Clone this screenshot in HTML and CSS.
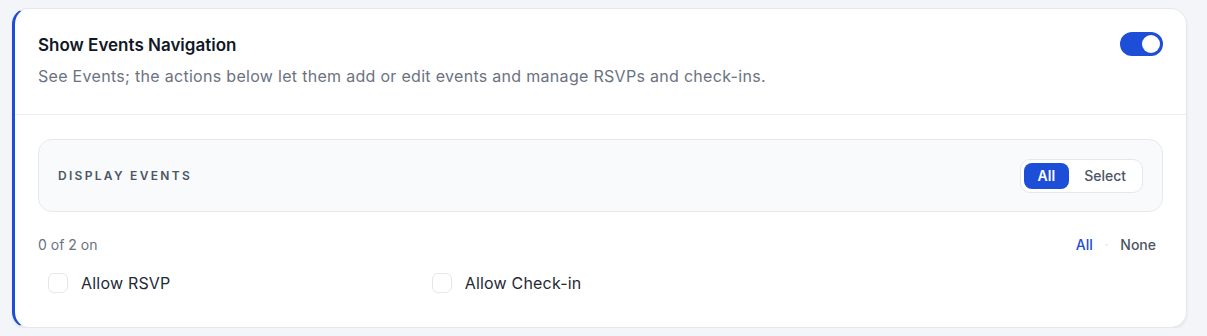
FILE: index.html
```html
<!DOCTYPE html>
<html>
<head>
<meta charset="utf-8">
<link rel="stylesheet" href="styles.css">
</head>
<body>
<section class="card">
  <div class="card-head">
    <div class="head-text">
      <h2 class="title">Show Events Navigation</h2>
      <p class="desc">See Events; the actions below let them add or edit events and manage RSVPs and check-ins.</p>
    </div>
    <span class="toggle"><span class="knob"></span></span>
  </div>
  <div class="card-body">
    <div class="panel">
      <span class="panel-label">DISPLAY EVENTS</span>
      <div class="seg">
        <span class="seg-btn active">All</span>
        <span class="seg-btn">Select</span>
      </div>
    </div>
    <div class="list-head">
      <span class="count">0 of 2 on</span>
      <div class="bulk">
        <span class="bulk-all">All</span>
        <span class="dot">·</span>
        <span class="bulk-none">None</span>
      </div>
    </div>
    <div class="items">
      <label class="item"><span class="box"></span><span class="item-label">Allow RSVP</span></label>
      <label class="item"><span class="box"></span><span class="item-label">Allow Check-in</span></label>
    </div>
  </div>
</section>
</body>
</html>
```

FILE: styles.css
```css
* { box-sizing: border-box; }
html, body { margin: 0; padding: 0; }
body {
  background: #f4f5f9;
  font-family: Inter, "Noto Sans", sans-serif;
  padding: 8px 20px 0 12px;
}
.card {
  background: #fff;
  border: 1px solid #e5e7eb;
  border-left: 3px solid #1d4ed8;
  border-radius: 16px;
  box-shadow: 0 2px 3px rgba(15, 23, 42, 0.06);
  height: 320px;
  overflow: hidden;
}
.card-head {
  display: flex;
  justify-content: space-between;
  align-items: flex-start;
  padding: 25px 23px 0 23px;
  height: 106px;
  border-bottom: 1px solid #eceef2;
}
.title {
  margin: 0;
  font-size: 17px;
  font-weight: 600;
  color: #111827;
  line-height: 22px;
}
.desc {
  margin: 9px 0 0;
  font-size: 16px;
  letter-spacing: 0.3px;
  color: #6b7280;
  line-height: 23px;
}
.toggle {
  width: 43px;
  height: 24px;
  background: #1d4ed8;
  border-radius: 12px;
  display: flex;
  align-items: center;
  justify-content: flex-end;
  padding: 0 3px;
  margin-top: -2px;
}
.knob {
  width: 18px;
  height: 18px;
  border-radius: 50%;
  background: #fff;
}
.card-body {
  padding: 24px 23px 0 23px;
}
.panel {
  display: flex;
  justify-content: space-between;
  align-items: center;
  height: 73px;
  background: #f8fafc;
  border: 1px solid #e6e8ec;
  border-radius: 14px;
  padding: 0 19px;
}
.panel-label {
  font-size: 12px;
  font-weight: 600;
  letter-spacing: 2.3px;
  color: #4b5563;
}
.seg {
  display: flex;
  align-items: center;
  background: #fff;
  border: 1px solid #e5e7eb;
  border-radius: 10px;
  padding: 3px;
  height: 34px;
  gap: 2px;
}
.seg-btn {
  font-size: 14px;
  font-weight: 500;
  color: #4b5563;
  padding: 0 13px;
  height: 26px;
  line-height: 26px;
  border-radius: 8px;
}
.seg-btn.active {
  background: #1d4ed8;
  color: #fff;
  font-weight: 600;
  padding: 0 14px;
}
.list-head {
  display: flex;
  justify-content: space-between;
  align-items: center;
  margin-top: 22px;
  height: 20px;
  padding-right: 7px;
}
.count {
  font-size: 14px;
  color: #6b7280;
}
.bulk {
  display: flex;
  align-items: center;
  gap: 12px;
  font-size: 14px;
}
.bulk-all { color: #1d4ed8; font-weight: 500; }
.bulk-none { color: #4b5563; font-weight: 500; }
.dot { color: #cbd5e1; font-size: 12px; }
.items {
  display: grid;
  grid-template-columns: repeat(3, 1fr);
  gap: 26px;
  margin-top: 12px;
}
.item {
  display: flex;
  align-items: center;
  gap: 13px;
  padding: 7px 10px;
}
.box {
  width: 20px;
  height: 20px;
  border: 1px solid #e5e7eb;
  border-radius: 6px;
  background: #fff;
}
.item-label {
  font-size: 16px;
  letter-spacing: 0.2px;
  color: #1f2937;
}
```
